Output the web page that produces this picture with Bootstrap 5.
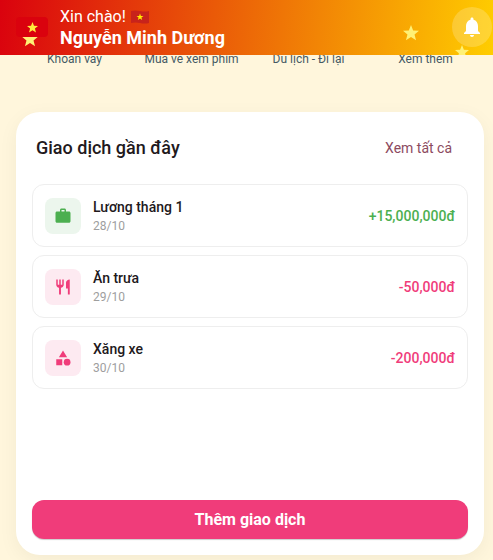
<!DOCTYPE html>
<html lang="vi">
<head>
<meta charset="utf-8">
<meta name="viewport" content="width=device-width, initial-scale=1">
<title>Giao dịch gần đây</title>
<link href="https://cdn.jsdelivr.net/npm/bootstrap@5.3.0/dist/css/bootstrap.min.css" rel="stylesheet">
<style>
  body { font-family: Roboto, "Noto Sans", sans-serif; font-size: 14px; line-height: 20px; background: #fff6dc; color: #22191c; overflow-x: hidden; }
  .app-header { height: 55px; padding: 7px 1px 0 16px; background: linear-gradient(96deg, #da020e, #ffcd00); color: #fff; overflow: hidden; }
  .flag-box { width: 32px; height: 20px; border-radius: 4px; background: #da020e; margin-top: 10px; }
  .greeting { font-size: 16px; line-height: 20px; }
  .user-name { font-size: 18px; line-height: 22px; font-weight: 700; }
  .bell { width: 40px; height: 40px; background: rgba(255,255,255,.2); }
  .deco { position: absolute; fill: #fff176; }
  .deco-left { left: 22px; top: 31px; }
  .deco-mid { right: 74px; top: 25px; }
  .deco-right { right: 24px; top: 45px; }
  .categories { padding: 49px 9px 0 16px; font-size: 12px; color: #455a64; }
  .panel { margin: 43px 9px 5px 16px; min-height: 443px; padding: 16px; border-radius: 24px; box-shadow: 0 5px 20px rgba(0,0,0,.05); background: #fff; }
  .panel-head { height: 40px; padding: 0 16px 0 4px; margin-bottom: 16px; }
  .panel-title { font-size: 18px; line-height: 24px; font-weight: 500; }
  .see-all { color: #8c4a60; }
  .entry { padding: 12px; height: 63px; border: 1px solid #eee; border-radius: 12px; }
  .entry-icon { width: 36px; height: 36px; border-radius: 8px; background: #fdeaf1; fill: #f03c7a; }
  .entry-icon.income { background: #ecf6ed; fill: #4caf50; }
  .entry-name { line-height: 20px; font-weight: 500; }
  .entry-date { font-size: 12px; line-height: 18px; color: #9e9e9e; }
  .amount { font-weight: 500; color: #f03c7a; }
  .amount.income { color: #4caf50; }
  .add-btn { height: 39px; border: 0; border-radius: 12px; background: #f03c7a; color: #fff; font-size: 16px; line-height: 24px; font-weight: 700; box-shadow: 0 1px 1px rgba(0,0,0,.2); }
  .add-btn:hover { background: #db2f6a; color: #fff; }
</style>
<script src="https://cdn.jsdelivr.net/npm/bootstrap@5.3.0/dist/js/bootstrap.bundle.min.js"></script>
</head>
<body>
<svg class="d-none" xmlns="http://www.w3.org/2000/svg">
  <symbol id="star" viewBox="0 0 20 20"><path d="M10 0l2.700 6.800 7.300.500-5.600 4.600 1.900 7.100L10 15l-6.300 4 1.900-7.100L0 7.300l7.300-.500z"/></symbol>
</svg>

<header class="app-header fixed-top d-flex align-items-start">
  <svg class="deco deco-left" width="16" height="16"><use href="#star"/></svg>
  <svg class="deco deco-mid" width="16" height="16"><use href="#star"/></svg>
  <svg class="deco deco-right" width="14" height="14"><use href="#star"/></svg>
  <div class="flag-box position-relative d-flex align-items-center justify-content-center">
    <svg width="11" height="11" fill="#ffeb3b"><use href="#star"/></svg>
  </div>
  <div class="flex-grow-1 ps-2 ms-1">
    <div class="greeting d-flex align-items-center gap-1">Xin chào!
      <svg width="20" height="14" viewBox="0 0 20 14" role="img" aria-label="Việt Nam">
        <path fill="#c8231b" d="M1 1q4-1 9 0t9 0v12q-4 1-9 0t-9 0z"/>
        <path fill="#ffeb00" d="M10 3.400l.900 2.500h2.600l-2.100 1.600.800 2.600-2.200-1.600-2.200 1.600.800-2.600-2.100-1.600h2.600z"/>
      </svg>
    </div>
    <div class="user-name">Nguyễn Minh Dương</div>
  </div>
  <button type="button" class="btn bell rounded-circle border-0 p-0 d-flex align-items-center justify-content-center" aria-label="Thông báo">
    <svg width="24" height="24" viewBox="0 0 24 24" fill="#fff"><path d="M12 22c1.1 0 2-.9 2-2h-4c0 1.1.9 2 2 2zm6-6v-5c0-3.07-1.63-5.64-4.5-6.32V4c0-.83-.67-1.5-1.5-1.5s-1.5.67-1.5 1.5v.68C7.64 5.36 6 7.92 6 11v5l-2 2v1h16v-1z"/></svg>
  </button>
</header>

<main>
  <nav class="categories row g-0 text-center">
    <span class="col">Khoản vay</span>
    <span class="col">Mua vé xem phim</span>
    <span class="col">Du lịch - Đi lại</span>
    <span class="col">Xem thêm</span>
  </nav>

  <section class="panel d-flex flex-column">
    <div class="panel-head d-flex align-items-center justify-content-between">
      <h1 class="panel-title m-0">Giao dịch gần đây</h1>
      <a class="see-all text-decoration-none" href="#">Xem tất cả</a>
    </div>
    <ul class="list-unstyled d-flex flex-column gap-2 mb-4">
      <li class="entry d-flex align-items-center">
        <span class="entry-icon income d-flex align-items-center justify-content-center flex-shrink-0">
          <svg width="18" height="18" viewBox="0 0 24 24"><path d="M20 6h-4V4c0-1.11-.89-2-2-2h-4c-1.11 0-2 .89-2 2v2H4c-1.11 0-2 .89-2 2v11c0 1.11.89 2 2 2h16c1.11 0 2-.89 2-2V8c0-1.11-.89-2-2-2zm-6 0h-4V4h4v2z"/></svg>
        </span>
        <div class="flex-grow-1 ps-2 ms-1"><div class="entry-name">Lương tháng 1</div><div class="entry-date">28/10</div></div>
        <span class="amount income">+15,000,000đ</span>
      </li>
      <li class="entry d-flex align-items-center">
        <span class="entry-icon d-flex align-items-center justify-content-center flex-shrink-0">
          <svg width="18" height="18" viewBox="0 0 24 24"><path d="M11 9H9V2H7v7H5V2H3v7c0 2.12 1.66 3.84 3.75 3.97V22h2.5v-9.03C11.34 12.84 13 11.12 13 9V2h-2v7zm5-3v8h2.5v8H21V2c-2.76 0-5 2.24-5 4z"/></svg>
        </span>
        <div class="flex-grow-1 ps-2 ms-1"><div class="entry-name">Ăn trưa</div><div class="entry-date">29/10</div></div>
        <span class="amount">-50,000đ</span>
      </li>
      <li class="entry d-flex align-items-center">
        <span class="entry-icon d-flex align-items-center justify-content-center flex-shrink-0">
          <svg width="18" height="18" viewBox="0 0 24 24"><path d="M12 2l-5.500 9h11zM3 13.500h8v8H3z"/><circle cx="17.500" cy="17.500" r="4.500"/></svg>
        </span>
        <div class="flex-grow-1 ps-2 ms-1"><div class="entry-name">Xăng xe</div><div class="entry-date">30/10</div></div>
        <span class="amount">-200,000đ</span>
      </li>
    </ul>
    <button type="button" class="btn add-btn w-100 mt-auto py-0">Thêm giao dịch</button>
  </section>
</main>
</body>
</html>
